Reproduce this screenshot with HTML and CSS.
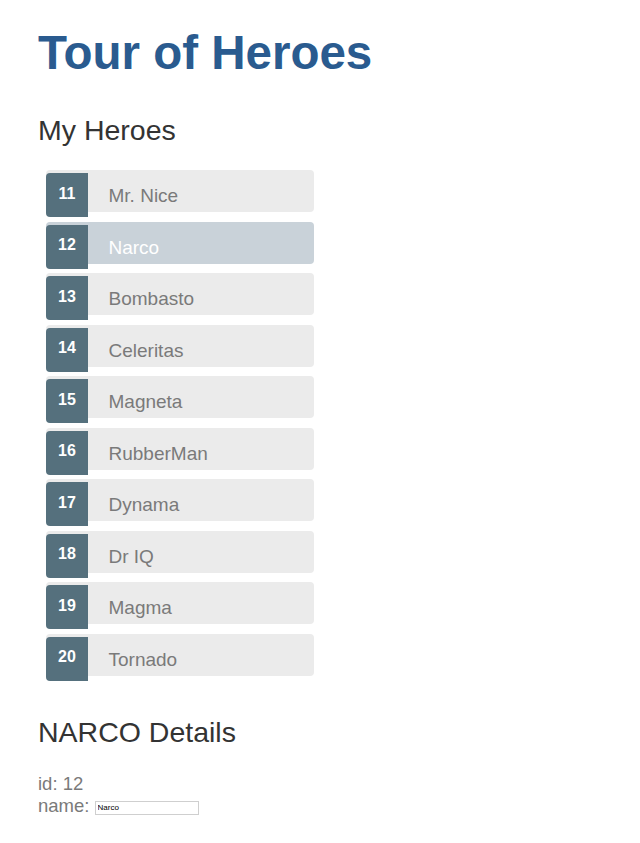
FILE: index.html
```html
<!DOCTYPE html>
<html>
<head>
<meta charset="utf-8">
<title>Tour of Heroes</title>
<link rel="stylesheet" href="styles.css">
</head>
<body>
  <h1 class="title">Tour of Heroes</h1>
  <h2 class="section-title heroes-title">My Heroes</h2>
  <ul class="heroes">
    <li class="hero"><span class="badge">11</span><span class="name">Mr. Nice</span></li>
    <li class="hero selected"><span class="badge">12</span><span class="name">Narco</span></li>
    <li class="hero"><span class="badge">13</span><span class="name">Bombasto</span></li>
    <li class="hero"><span class="badge">14</span><span class="name">Celeritas</span></li>
    <li class="hero"><span class="badge">15</span><span class="name">Magneta</span></li>
    <li class="hero"><span class="badge">16</span><span class="name">RubberMan</span></li>
    <li class="hero"><span class="badge">17</span><span class="name">Dynama</span></li>
    <li class="hero"><span class="badge">18</span><span class="name">Dr IQ</span></li>
    <li class="hero"><span class="badge">19</span><span class="name">Magma</span></li>
    <li class="hero"><span class="badge">20</span><span class="name">Tornado</span></li>
  </ul>
  <div class="details">
    <h2 class="section-title">NARCO Details</h2>
    <div class="field"><span>id: </span>12</div>
    <div class="field"><label>name: <input class="name-input" type="text" value="Narco" placeholder="name"></label></div>
  </div>
</body>
</html>
```

FILE: styles.css
```css
html, body {
  margin: 0;
  padding: 0;
  background: #ffffff;
}

body {
  padding-left: 38px;
  font-family: "Liberation Sans", Arial, sans-serif;
  color: #7a7a7a;
}

.title {
  margin: 29px 0 0 0;
  font-size: 47.5px;
  line-height: 48px;
  font-weight: bold;
  color: #2a5b8f;
}

.section-title {
  margin: 0;
  font-size: 28.5px;
  line-height: 32px;
  font-weight: normal;
  color: #333333;
}

.heroes-title {
  margin-top: 37px;
}

.heroes {
  list-style: none;
  margin: 24px 0 0 8px;
  padding: 0;
  width: 268px;
  display: flex;
  flex-direction: column;
  gap: 9.56px;
}

.hero {
  height: 42px;
  background: #ebebeb;
  border-radius: 4px;
  display: flex;
  align-items: flex-start;
}

.hero.selected {
  background: #c9d2d9;
}

.hero.selected .name {
  color: #ffffff;
}

.badge {
  box-sizing: border-box;
  width: 42px;
  height: 44px;
  margin-top: 3px;
  padding-top: 12.5px;
  background: #55707d;
  border-radius: 4px 0 0 4px;
  color: #ffffff;
  font-size: 16px;
  line-height: 16px;
  font-weight: bold;
  text-align: center;
}

.name {
  margin-left: 20.5px;
  padding-top: 15px;
  font-size: 19px;
  line-height: 22px;
  color: #7a7a7a;
}

.details {
  margin-top: 40px;
}

.field {
  font-size: 18.5px;
  line-height: 22px;
  color: #7a7a7a;
}

.details .section-title {
  margin-bottom: 25px;
}

.name-input {
  box-sizing: border-box;
  width: 104px;
  height: 14px;
  margin: 6px 0 0 0;
  padding: 0 2px;
  vertical-align: top;
  border: 1px solid #cfcfcf;
  font-family: "Liberation Sans", Arial, sans-serif;
  font-size: 8px;
  color: #000000;
  background: #ffffff;
}
```
